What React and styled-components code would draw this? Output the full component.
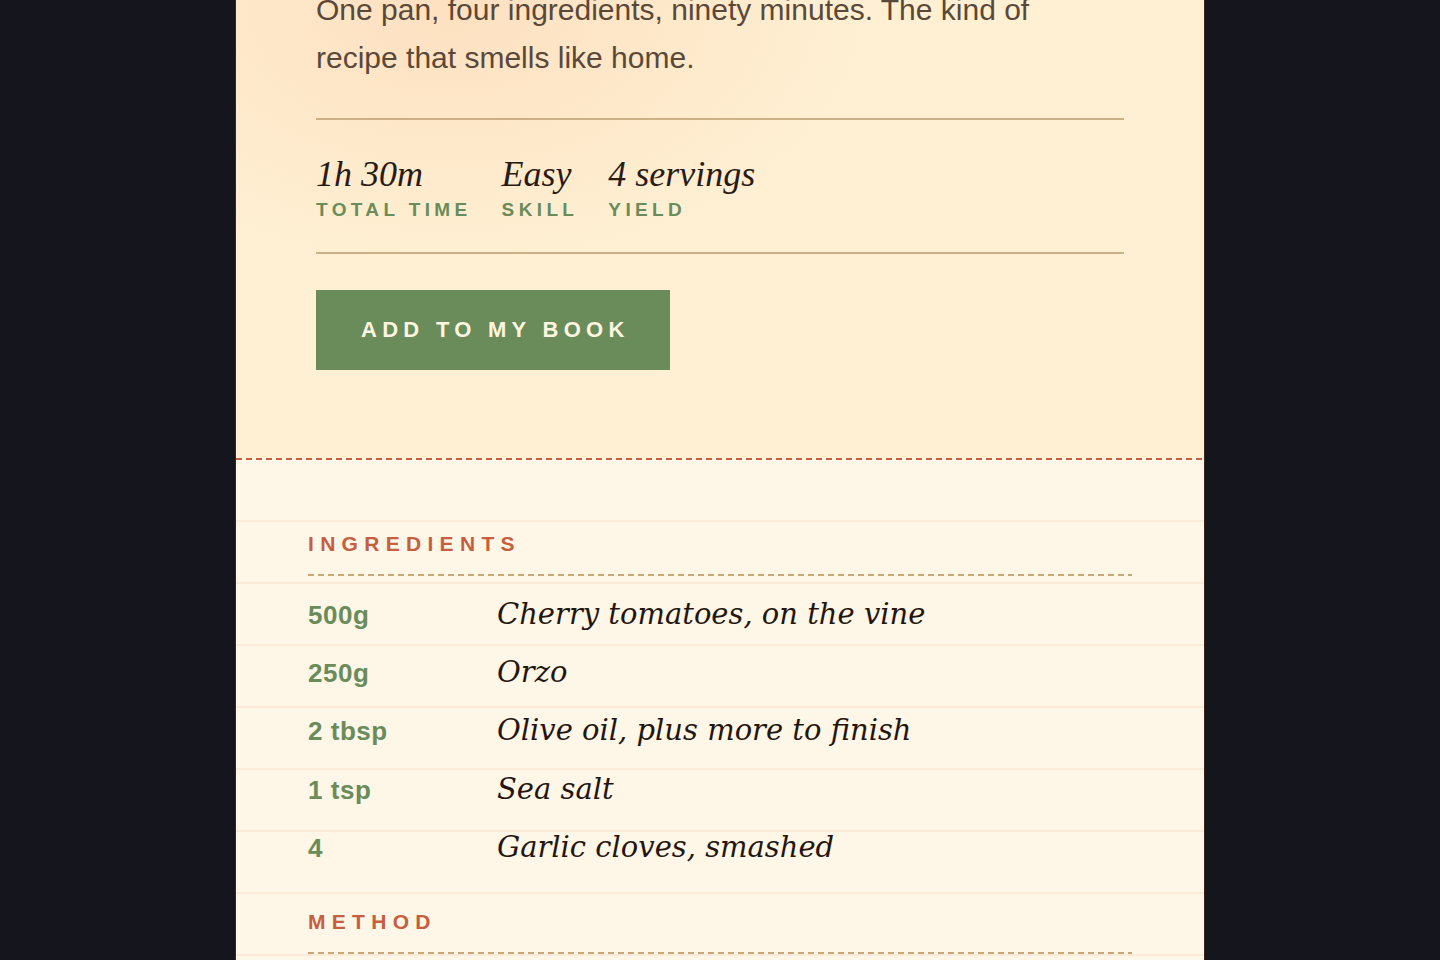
import React from "react";
import styled, { createGlobalStyle } from "styled-components";

const GlobalStyle = createGlobalStyle`
  html, body {
    margin: 0;
    padding: 0;
    background: #15151e;
    overflow: hidden;
  }
  body {
    font-family: "Liberation Sans", Arial, sans-serif;
  }
`;

const Page = styled.div`
  display: flex;
  justify-content: center;
  min-height: 100vh;
`;

const Card = styled.article`
  width: 968px;
  border-left: 1px solid #3a251b;
  border-right: 1px solid #3a251b;
  background: #fef6e6;
`;

const Hero = styled.header`
  padding: 0 80px 88px;
  background:
    radial-gradient(ellipse 620px 380px at 22% 4%, rgba(250, 205, 170, 0.45), rgba(250, 205, 170, 0) 70%),
    #fff0d3;
`;

const Lede = styled.p`
  margin: -14px 0 0;
  max-width: 780px;
  font-size: 30px;
  line-height: 48px;
  color: #5a4838;
`;

const Facts = styled.dl`
  display: flex;
  gap: 30px;
  margin: 36px 0 0;
  padding: 35px 0 31px;
  border-top: 2px solid #cdb083;
  border-bottom: 2px solid #cdb083;
`;

const Fact = styled.div`
  display: flex;
  flex-direction: column;
`;

const FactValue = styled.dd`
  order: 1;
  margin: 0;
  font-family: "Liberation Serif", "Times New Roman", serif;
  font-style: italic;
  font-size: 36px;
  line-height: 1.1;
  color: #2a1a14;
`;

const FactLabel = styled.dt`
  order: 2;
  margin-top: 4px;
  font-size: 19px;
  font-weight: 700;
  letter-spacing: 0.23em;
  text-transform: uppercase;
  color: #6a8b5a;
`;

const SaveButton = styled.button`
  display: block;
  height: 80px;
  margin-top: 36px;
  padding: 0 40px 0 45px;
  border: 0;
  border-radius: 0;
  background: #6a8b5a;
  color: #fdf5e0;
  font-family: "Liberation Sans", Arial, sans-serif;
  font-size: 22px;
  font-weight: 700;
  letter-spacing: 0.24em;
  text-transform: uppercase;
  cursor: pointer;
`;

const Perforation = styled.div`
  height: 2px;
  background: repeating-linear-gradient(90deg, #c55f3f 0 6px, transparent 6px 10px);
`;

const Sheet = styled.section`
  display: flex;
  flex-direction: column;
  gap: 33px;
  padding: 72px;
  background:
    repeating-linear-gradient(
      180deg,
      transparent 0 60px,
      rgba(232, 180, 150, 0.16) 60px 62px
    ),
    #fef6e6;
`;

const Block = styled.div``;

const BlockTitle = styled.h2`
  margin: 0;
  padding-bottom: 20px;
  font-size: 21px;
  line-height: 24px;
  font-weight: 700;
  letter-spacing: 0.3em;
  text-transform: uppercase;
  color: #c55f3f;
  background: repeating-linear-gradient(90deg, #c9a877 0 6px, transparent 6px 10px) left bottom / 100% 2px no-repeat;
`;

const List = styled.ul`
  list-style: none;
  margin: 9px 0 0;
  padding: 0;
`;

const Row = styled.li`
  display: grid;
  grid-template-columns: 189px 1fr;
  align-items: baseline;
  padding: 10px 0;
`;

const Qty = styled.span`
  font-size: 26px;
  font-weight: 700;
  letter-spacing: 0.02em;
  color: #6a8b5a;
`;

const Item = styled.span`
  font-family: "DejaVu Serif", Georgia, serif;
  font-style: italic;
  font-size: 29px;
  line-height: 38.4px;
  color: #24160f;
`;

const facts = [
  { value: "1h 30m", label: "Total time" },
  { value: "Easy", label: "Skill" },
  { value: "4 servings", label: "Yield" },
];

const ingredients = [
  ["500g", "Cherry tomatoes, on the vine"],
  ["250g", "Orzo"],
  ["2 tbsp", "Olive oil, plus more to finish"],
  ["1 tsp", "Sea salt"],
  ["4", "Garlic cloves, smashed"],
];

export default function App() {
  return (
    <>
      <GlobalStyle />
      <Page>
        <Card>
          <Hero>
            <Lede>
              One pan, four ingredients, ninety minutes. The kind of recipe that
              smells like home.
            </Lede>
            <Facts>
              {facts.map((f) => (
                <Fact key={f.label}>
                  <FactLabel>{f.label}</FactLabel>
                  <FactValue>{f.value}</FactValue>
                </Fact>
              ))}
            </Facts>
            <SaveButton>Add to my book</SaveButton>
          </Hero>
          <Perforation />
          <Sheet>
            <Block>
              <BlockTitle>Ingredients</BlockTitle>
              <List>
                {ingredients.map(([qty, name]) => (
                  <Row key={name}>
                    <Qty>{qty}</Qty>
                    <Item>{name}</Item>
                  </Row>
                ))}
              </List>
            </Block>
            <Block>
              <BlockTitle>Method</BlockTitle>
            </Block>
          </Sheet>
        </Card>
      </Page>
    </>
  );
}
